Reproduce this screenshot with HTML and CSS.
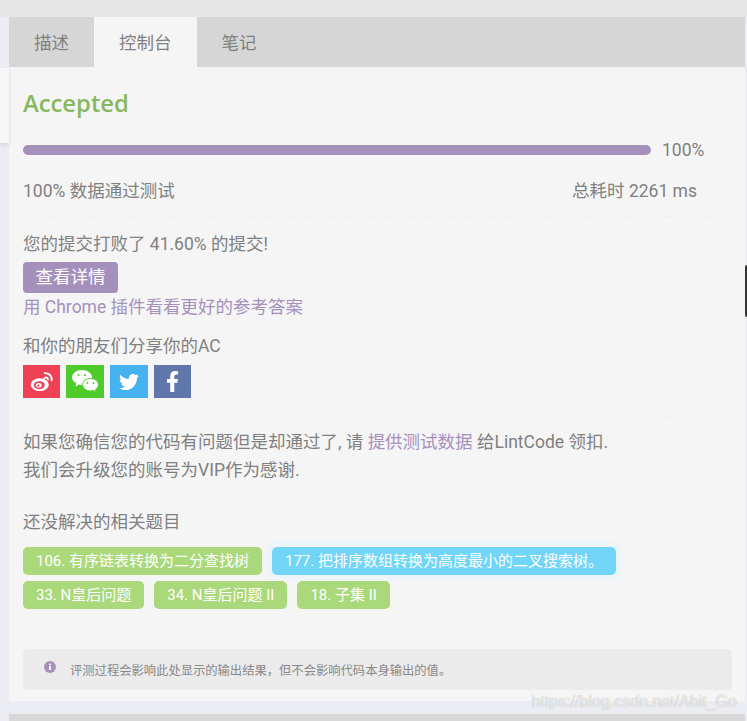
FILE: index.html
```html
<!DOCTYPE html>
<html lang="en">
<head>
    <meta charset="UTF-8">
    <meta name="viewport" content="width=device-width, initial-scale=1.0">
    <title>Accepted</title>
    <link rel="stylesheet" href="styles.css">
</head>
<body>
    <div class="top-strip"></div>
    <div class="side-card"></div>
    <div class="side-handle"></div>
    <div class="main">
        <div class="tabs">
            <div class="tab">描述</div>
            <div class="tab active">控制台</div>
            <div class="tab">笔记</div>
        </div>
        <div class="panel">
            <h2 class="status">Accepted</h2>
            <div class="progress-row">
                <div class="progress"></div>
                <span class="progress-text">100%</span>
            </div>
            <div class="stats">
                <span>100% 数据通过测试</span>
                <span>总耗时 2261 ms</span>
            </div>
            <div class="section beat">
                <p class="beat-text">您的提交打败了 41.60% 的提交!</p>
                <a class="details-btn">查看详情</a>
                <a class="link chrome-link">用 Chrome 插件看看更好的参考答案</a>
                <p class="share-text">和你的朋友们分享你的AC</p>
                <div class="share">
                    <span class="share-icon weibo">
                        <svg width="24" height="20" viewBox="0 0 26 22">
                            <ellipse cx="10.5" cy="14" rx="10" ry="7" fill="#fff"/>
                            <ellipse cx="10" cy="14.5" rx="6" ry="4.4" fill="#ef4056"/>
                            <ellipse cx="9.5" cy="14.7" rx="3.2" ry="2.5" fill="#fff"/>
                            <circle cx="9" cy="15" r="1.2" fill="#ef4056"/>
                            <path d="M15 7.5c2-2.5 5-1.500 4.500 1.500" fill="none" stroke="#fff" stroke-width="2"/>
                            <path d="M15 1.500c5.500-1 9.500 3 8.500 8.500" fill="none" stroke="#fff" stroke-width="2"/>
                        </svg>
                    </span>
                    <span class="share-icon wechat">
                        <svg width="27" height="25" viewBox="0 0 27 25">
                            <path d="M10 1c5.500 0 10 3.300 10 7.500S15.500 16 10 16c-1 0-2-.1-3-.4L3.500 17.500 4.300 14.300C1.700 12.900 0 10.800 0 8.500 0 4.300 4.500 1 10 1z" fill="#fff"/>
                            <path d="M18.500 9.500c4.500 0 8 2.800 8 6.200 0 2-1.200 3.700-3 4.800l.6 2.500-2.800-1.500c-.9.200-1.800.4-2.800.4-4.500 0-8-2.800-8-6.200s3.500-6.200 8-6.200z" fill="#fff" stroke="#4fcb2c"/>
                            <circle cx="6.500" cy="6" r="1.100" fill="#4fcb2c"/>
                            <circle cx="13" cy="6" r="1.100" fill="#4fcb2c"/>
                            <circle cx="15.500" cy="14" r=".9" fill="#4fcb2c"/>
                            <circle cx="21.500" cy="14" r=".9" fill="#4fcb2c"/>
                        </svg>
                    </span>
                    <span class="share-icon twitter">
                        <svg width="20" height="20" viewBox="0 0 512 512">
                            <path fill="#fff" d="M459.37 151.716c.325 4.548.325 9.097.325 13.645 0 138.72-105.583 298.558-298.558 298.558-59.452 0-114.68-17.219-161.137-47.106 8.447.974 16.568 1.299 25.34 1.299 49.055 0 94.213-16.568 130.274-44.832-46.132-.975-84.792-31.188-98.112-72.772 6.498.974 12.995 1.624 19.818 1.624 9.421 0 18.843-1.3 27.614-3.573-48.081-9.747-84.143-51.98-84.143-102.985v-1.299c13.969 7.797 30.214 12.67 47.431 13.319-28.264-18.843-46.781-51.005-46.781-87.391 0-19.492 5.197-37.36 14.294-52.954 51.655 63.675 129.3 105.258 216.365 109.807-1.624-7.797-2.599-15.918-2.599-24.04 0-57.828 46.782-104.934 104.934-104.934 30.213 0 57.502 12.67 76.67 33.137 23.715-4.548 46.456-13.32 66.599-25.34-7.798 24.366-24.366 44.833-46.132 57.827 21.117-2.273 41.584-8.122 60.426-16.243-14.292 20.791-32.161 39.308-52.628 54.253z"/>
                        </svg>
                    </span>
                    <span class="share-icon facebook">
                        <svg width="13" height="21" viewBox="0 0 320 512">
                            <path fill="#fff" d="M279.14 288l14.22-92.66h-88.91v-60.13c0-25.35 12.42-50.06 52.24-50.06h40.42V6.26S260.43 0 225.36 0c-73.22 0-121.08 44.38-121.08 124.72v70.62H22.89V288h81.39v224h100.17V288z"/>
                        </svg>
                    </span>
                </div>
            </div>
            <div class="section feedback">
                <p>如果您确信您的代码有问题但是却通过了, 请 <a class="link">提供测试数据</a> 给LintCode 领扣.</p>
                <p>我们会升级您的账号为VIP作为感谢.</p>
            </div>
            <p class="related-title">还没解决的相关题目</p>
            <div class="tags">
                <a class="tag">106. 有序链表转换为二分查找树</a>
                <a class="tag tag-current">177. 把排序数组转换为高度最小的二叉搜索树。</a>
                <a class="tag">33. N皇后问题</a>
                <a class="tag">34. N皇后问题 II</a>
                <a class="tag">18. 子集 II</a>
            </div>
            <div class="note">
                <svg class="note-icon" width="12" height="12" viewBox="0 0 12 12">
                    <circle cx="6" cy="6" r="6" fill="#a590bc"/>
                    <rect x="5.100" y="5" width="1.800" height="4" fill="#fff"/>
                    <rect x="5.100" y="2.600" width="1.800" height="1.600" fill="#fff"/>
                </svg>
                <span>评测过程会影响此处显示的输出结果，但不会影响代码本身输出的值。</span>
            </div>
        </div>
        <div class="bottom-bar"></div>
    </div>
    <div class="watermark">https://blog.csdn.net/Abit_Go</div>
</body>
</html>
```

FILE: styles.css
```css
html, body {
    height: 100%;
}
body {
    font-family: Roboto, "Noto Sans CJK SC", sans-serif;
    font-size: 17.5px;
    font-weight: 400;
    margin: 0;
    padding: 0;
    color: #808080;
    background-color: #ecedf2;
    overflow: hidden;
    position: relative;
}
p {
    margin: 0;
}
.top-strip {
    height: 17px;
    background-color: #e6e6e6;
}
.side-card {
    position: absolute;
    left: 0;
    top: 68px;
    width: 9px;
    height: 75px;
    background-color: #f6f6f6;
    box-shadow: 0 2px 4px rgba(0, 0, 0, 0.12);
}
.side-handle {
    position: absolute;
    right: 0;
    top: 265px;
    width: 2px;
    height: 52px;
    background-color: #333;
    border-radius: 2px 0 0 2px;
}
.main {
    margin-left: 9px;
    width: 736px;
}
.tabs {
    display: flex;
    height: 50px;
    background-color: #d6d6d6;
}
.tab {
    padding: 0 25px;
    line-height: 52px;
}
.tab.active {
    background-color: #f5f5f5;
}
.panel {
    height: 634px;
    box-sizing: border-box;
    padding: 20px 13px 0 14px;
    background-color: #f5f5f5;
}
.status {
    margin: 0;
    font-family: "Open Sans", sans-serif;
    font-size: 23.800px;
    font-weight: 600;
    line-height: 32px;
    color: #86b860;
}
.progress-row {
    display: flex;
    align-items: center;
    margin-top: 24px;
    height: 14px;
}
.progress {
    width: 628px;
    height: 10px;
    border-radius: 5px;
    background-color: #a590bc;
}
.progress-text {
    margin-left: 11px;
}
.stats {
    display: flex;
    justify-content: space-between;
    padding: 0 35px 12px 0;
    margin-top: 22px;
    line-height: 25px;
    border-bottom: 1px dashed #efefef;
}
.section {
    border-bottom: 1px dashed #efefef;
}
.beat {
    padding: 15px 0 19px;
}
.beat-text {
    line-height: 25px;
}
.details-btn {
    display: block;
    width: 95px;
    height: 31px;
    margin-top: 5px;
    line-height: 30px;
    text-align: center;
    color: #fff;
    border-radius: 4px;
    background-color: #a590bc;
}
.link {
    color: #a590bc;
}
.chrome-link {
    display: block;
    line-height: 28px;
}
.share-text {
    margin-top: 13px;
    line-height: 25px;
}
.share {
    display: flex;
    gap: 6px;
    margin-top: 6px;
}
.share-icon {
    display: flex;
    align-items: center;
    justify-content: center;
    width: 38px;
    height: 33px;
}
.weibo {
    width: 37px;
    background-color: #ef4056;
}
.wechat {
    background-color: #4fcb2c;
}
.twitter {
    background-color: #46b2f0;
}
.facebook {
    width: 37px;
    background-color: #5f77ab;
}
.feedback {
    padding: 10px 0 0;
    border-bottom: none;
    line-height: 28px;
}
.related-title {
    margin-top: 26px;
    line-height: 25px;
}
.tags {
    display: flex;
    flex-wrap: wrap;
    gap: 6px 10px;
    margin-top: 12px;
}
.tag {
    height: 28px;
    padding: 0 13px;
    font-size: 15px;
    line-height: 28px;
    color: #fff;
    border-radius: 5px;
    background-color: #a9d97a;
}
.tag-current {
    background-color: #70d5f7;
    box-shadow: 0 0 0 6px #edf5f9;
}
.note {
    display: flex;
    align-items: center;
    height: 41px;
    margin-top: 40px;
    padding-left: 21px;
    font-size: 12.300px;
    color: #888;
    border-radius: 5px;
    background-color: #ebebeb;
}
.note-icon {
    margin-right: 14px;
    position: relative;
    top: -3px;
}
.bottom-bar {
    height: 7px;
    margin-top: 13px;
    background-color: #d8d8d8;
}
.watermark {
    position: absolute;
    right: 10px;
    top: 693px;
    font-family: "Liberation Sans", sans-serif;
    font-size: 16px;
    color: rgba(255, 255, 255, 0.75);
    text-shadow: 0 0 1px rgba(110, 110, 110, 0.6);
}
```
